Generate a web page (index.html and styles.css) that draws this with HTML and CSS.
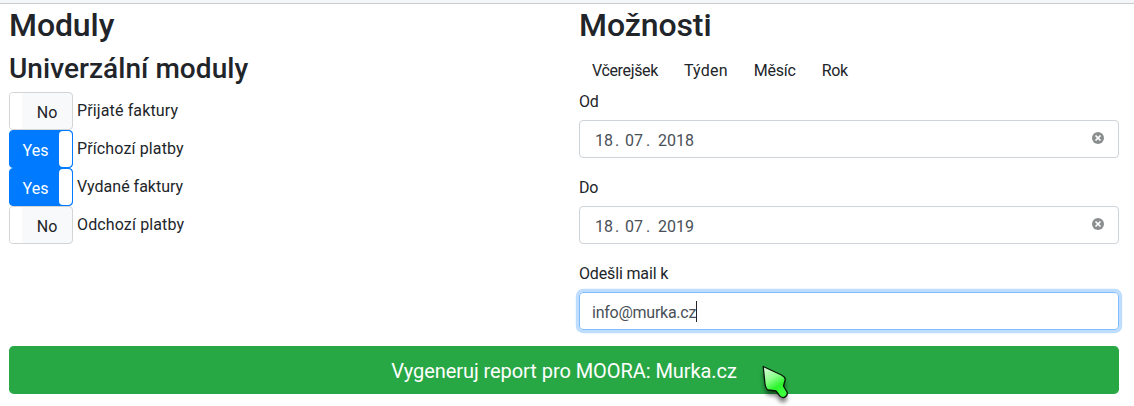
FILE: index.html
```html
<!DOCTYPE html>
<html lang="cs">
<head>
<meta charset="utf-8">
<title>Moduly</title>
<link rel="stylesheet" href="styles.css">
</head>
<body>
<div class="topbar"></div>
<main class="container">
  <div class="columns">
    <section class="column">
      <h2>Moduly</h2>
      <h3>Univerzální moduly</h3>
      <div class="module"><span class="toggle off"><span class="handle"></span><span class="state">No</span></span><span class="name">Přijaté faktury</span></div>
      <div class="module"><span class="toggle on"><span class="state">Yes</span><span class="handle"></span></span><span class="name">Příchozí platby</span></div>
      <div class="module"><span class="toggle on"><span class="state">Yes</span><span class="handle"></span></span><span class="name snug">Vydané faktury</span></div>
      <div class="module"><span class="toggle off"><span class="handle"></span><span class="state">No</span></span><span class="name">Odchozí platby</span></div>
    </section>
    <section class="column">
      <h2>Možnosti</h2>
      <div class="ranges"><span class="range tight">Včerejšek</span><span class="range roomy">Týden</span><span class="range slim">Měsíc</span><span class="range tight">Rok</span></div>
      <div class="group">
        <div class="label">Od</div>
        <div class="field date"><span class="part">18</span><span class="part dot">.</span><span class="part">07</span><span class="part dot wide">.</span><span class="part">2018</span>
          <svg class="clear" viewBox="0 0 12 12"><circle cx="6" cy="6" r="6" fill="#8b8e8f"/><path d="M3.500 3.500l5 5M8.500 3.500l-5 5" stroke="#fff" stroke-width="1.7"/></svg>
        </div>
      </div>
      <div class="group">
        <div class="label">Do</div>
        <div class="field date"><span class="part">18</span><span class="part dot">.</span><span class="part">07</span><span class="part dot wide">.</span><span class="part">2019</span>
          <svg class="clear" viewBox="0 0 12 12"><circle cx="6" cy="6" r="6" fill="#8b8e8f"/><path d="M3.500 3.500l5 5M8.500 3.500l-5 5" stroke="#fff" stroke-width="1.7"/></svg>
        </div>
      </div>
      <div class="group">
        <div class="label">Odešli mail k</div>
        <div class="field focused"><span class="email">info@murka.cz</span><span class="caret"></span></div>
      </div>
    </section>
  </div>
  <div class="submit">Vygeneruj report pro MOORA: Murka.cz</div>
</main>
<svg class="pointer" viewBox="0 0 44 46">
  <defs>
    <linearGradient id="skin" x1="0" y1="0" x2="0.5" y2="1"><stop offset="0" stop-color="#e4ffe4"/><stop offset="0.45" stop-color="#8cff8c"/><stop offset="0.75" stop-color="#2cf52c"/><stop offset="1" stop-color="#3cff3c"/></linearGradient>
    <filter id="shade" x="-30%" y="-30%" width="170%" height="170%"><feGaussianBlur stdDeviation="2.3"/></filter>
  </defs>
  <path d="M7.200 6.500L25.500 15Q29.300 17 29.300 19.500L27.500 26L31.300 32.500Q31.500 36.500 27.500 37.600Q24.500 37.800 23 35L20 31L12.500 30Q10 29.500 9 24Z" transform="translate(0 5)" fill="#000" opacity="0.5" filter="url(#shade)"/>
  <path d="M7.200 6.500L25.500 15Q29.300 17 29.300 19.500L27.500 26L31.300 32.500Q31.500 36.500 27.500 37.600Q24.500 37.800 23 35L20 31L12.500 30Q10 29.500 9 24Z" fill="url(#skin)" stroke="#071707" stroke-width="1.3" stroke-linejoin="round"/>
</svg>
</body>
</html>
```
FILE: styles.css
```css
* { box-sizing: border-box; }
body {
  position: relative;
  height: 406px;
  margin: 0;
  overflow: hidden;
  background: #fff;
  color: #212529;
  font: 400 16px/24px Roboto, sans-serif;
}
.topbar { height: 4px; background: #f5f6f7; border-bottom: 1px solid #c8cbcf; }
.container { padding: 2px 15px 0 9px; }
.columns { display: grid; grid-template-columns: 540px 540px; column-gap: 30px; }
h2, h3 { margin: 0 0 8px; font-weight: 500; line-height: 1.2; }
h2 { font-size: 32px; letter-spacing: -.1px; }
h3 { margin-bottom: 6px; font-size: 28px; letter-spacing: .05px; }
.module { display: flex; height: 38px; gap: 4px; }
.name { padding-top: 7px; letter-spacing: .13px; }
.snug { letter-spacing: 0; }
.toggle {
  display: flex;
  width: 64px;
  height: 38px;
  overflow: hidden;
  border: 1px solid #d3d4d5;
  border-radius: 4px;
}
.state { flex: 1; padding-top: 8px; text-align: center; }
.off { background: #f8f9fa; }
.off .handle { width: 12px; background: #fff; }
.on { border-color: #007bff; background: #007bff; color: #fff; }
.on .state { padding-left: 2px; }
.on .handle { width: 13px; border-radius: 4px; background: #fff; }
.ranges { display: flex; height: 37.6px; }
.range { padding: 7px 13px; }
.tight { letter-spacing: -.36px; }
.roomy { letter-spacing: .2px; }
.slim { letter-spacing: -.2px; }
.group { margin-bottom: 16px; }
.group + .group { padding-top: 2px; }
.label { margin-bottom: 6px; letter-spacing: -.15px; }
.field {
  display: flex;
  align-items: center;
  height: 38px;
  padding: 4px 12px 0;
  border: 1px solid #ced4da;
  border-radius: 4px;
  color: #495057;
}
.date { padding-left: 15px; }
.dot { width: 12px; padding-left: 2px; }
.wide { width: 15px; padding-left: 3px; }
.clear { width: 12px; height: 12px; margin: -6px 2px 0 auto; }
.focused { border-color: #80bdff; box-shadow: 0 0 0 3.2px rgba(0, 123, 255, .25); }
.email { letter-spacing: -.25px; }
.caret { width: 1px; height: 21px; margin-top: -3px; background: #212529; }
.submit {
  height: 48px;
  padding-top: 10px;
  border-radius: 4.8px;
  background: #28a745;
  color: #fff;
  font-size: 20px;
  line-height: 30px;
  letter-spacing: -.06px;
  text-align: center;
}
.pointer { position: absolute; left: 756px; top: 360px; width: 44px; height: 46px; }
```
